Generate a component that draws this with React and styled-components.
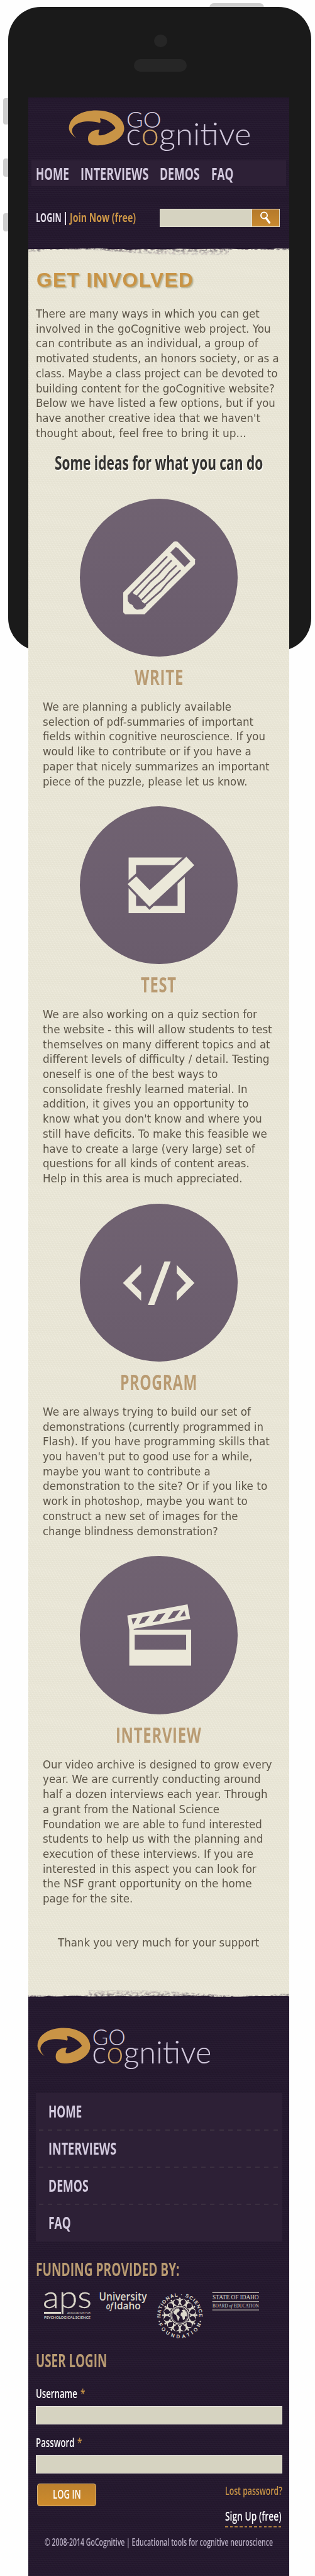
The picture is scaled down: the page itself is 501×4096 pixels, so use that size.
import React, { useLayoutEffect, useRef, useState } from "react";
import styled, { createGlobalStyle } from "styled-components";

const c = {
  night: "#24182e",
  panel: "#2d2036",
  paper: "#e8e5d6",
  cream: "#ebe8d9",
  field: "#d6d3c1",
  gold: "#c99446",
  tan: "#b99b72",
  lilac: "#d3cade",
  plum: "#6d5f6f",
  ink: "#5b5447",
};
const condensed = '"Open Sans", "Noto Sans", sans-serif';
const wide = '"DejaVu Sans", sans-serif';

const GlobalStyle = createGlobalStyle`
  body { margin: 0; background: #fefefe; }
  * { box-sizing: border-box; }
  h1, h2, h3, p, form { margin: 0; font-weight: inherit; }
`;

/* Text squeezed or stretched horizontally to an exact width */
const FitBox = styled.span`
  display: block;
  flex: none;
  width: ${(p) => p.$w}px;
  white-space: nowrap;
`;
const FitInner = styled.span`
  display: inline-block;
  transform-origin: 0 50%;
`;
function Fit({ w, children }) {
  const ref = useRef(null);
  const [scale, setScale] = useState(1);
  useLayoutEffect(() => {
    const natural = ref.current.offsetWidth;
    if (natural) setScale(w / natural);
  }, [w]);
  return (
    <FitBox $w={w}>
      <FitInner ref={ref} style={{ transform: `scaleX(${scale})` }}>{children}</FitInner>
    </FitBox>
  );
}

const Stage = styled.div`
  position: relative;
  width: 501px;
  height: 4096px;
  overflow: hidden;
  padding: 154.5px 0 0 45.4px;
`;
const PhoneBody = styled.div`
  position: absolute;
  left: 12.5px;
  top: 11.3px;
  width: 482.3px;
  height: 1023.5px;
  border-radius: 52px;
  background: #1a1a1a;
`;
const PhoneKey = styled.div`
  position: absolute;
  background: #cecece;
  left: ${(p) => p.$x}px;
  top: ${(p) => p.$y}px;
  width: ${(p) => p.$w}px;
  height: ${(p) => p.$h}px;
  border-radius: ${(p) => p.$r};
`;
const Camera = styled.div`
  position: absolute;
  left: 245.4px;
  top: 54.5px;
  width: 20.8px;
  height: 20.8px;
  border-radius: 50%;
  background: #262626;
`;
const Speaker = styled.div`
  position: absolute;
  left: 212.5px;
  top: 93.6px;
  width: 84.6px;
  height: 20.9px;
  border-radius: 10px;
  background: #262626;
`;
const Page = styled.main`
  position: relative;
  width: 414.7px;
`;
const weaveDark = `repeating-linear-gradient(0deg, rgba(255,255,255,.018) 0 1px, transparent 1px 3px),
  repeating-linear-gradient(63deg, rgba(0,0,0,.06) 0 1px, transparent 1px 4px)`;
const weaveLight = `repeating-linear-gradient(0deg, rgba(120,110,60,.025) 0 1px, transparent 1px 3px),
  repeating-linear-gradient(63deg, rgba(255,255,240,.2) 0 1px, transparent 1px 4px)`;

const Header = styled.header`
  height: 240.5px;
  padding-top: 20.3px;
  background: ${weaveDark}, ${c.night};
`;
const LogoSvg = styled.svg`
  display: block;
  margin-left: ${(p) => p.$ml}px;
  overflow: visible;
`;
const NavBar = styled.nav`
  display: flex;
  align-items: center;
  gap: 17.8px;
  height: 40.6px;
  margin: 14.7px 4.7px 0 4.2px;
  padding-left: 7.6px;
  background: ${c.panel};
  color: ${c.lilac};
  font: 700 26.8px/40px ${condensed};
`;
const ToolRow = styled.div`
  display: flex;
  align-items: center;
  height: 29.6px;
  margin-top: 35.6px;
  padding-left: 12px;
  color: #e2dce8;
  font: 700 19.3px/28px ${condensed};
`;
const Bar = styled.i`
  width: 2px;
  height: 21px;
  margin: 2px 5.6px 0 5.6px;
  background: #e2dce8;
`;
const Join = styled.span`color: ${c.gold};`;
const SearchBox = styled.div`
  display: flex;
  width: 190.4px;
  height: 29.6px;
  margin-left: 38.2px;
  background: ${c.field};
  border: 1px solid #dedccd;
`;
const SearchButton = styled.span`
  margin-left: auto;
  width: 44px;
  background: linear-gradient(#b5792a, #c88a30);
  border-left: 1px solid #eee6d2;
  display: flex;
  align-items: center;
  justify-content: center;
`;

const Content = styled.section`
  position: relative;
  height: 2780.3px;
  padding-top: 31.7px;
  background: ${weaveLight}, ${c.paper};
  color: ${c.ink};
`;
const EdgeSvg = styled.svg`
  position: absolute;
  left: 0;
  ${(p) => (p.$bottom ? "bottom: -1px; transform: scale(-1);" : "top: -1px;")}
  pointer-events: none;
`;
const Title = styled.h1`
  margin-left: 12.2px;
  font: 700 32px/36px "Liberation Sans", Arial, sans-serif;
  letter-spacing: 1.5px;
  color: ${c.gold};
  text-shadow: 2px 2px 2px rgba(150, 145, 105, 0.65);
`;
const Copy = styled.p`
  margin: ${(p) => p.$top}px 0 0 ${(p) => p.$left}px;
  font: 400 16.8px/23.7px ${wide};
`;
const Lead = styled.h2`
  margin: 17.1px 0 0 42px;
  font: 700 29.8px/36px ${condensed};
  color: #343331;
  text-shadow: 2px 2px 0 #fbfaf3;
`;
const Idea = styled.article`
  display: flex;
  flex-direction: column;
  padding-top: ${(p) => p.$top}px;
`;
const Disc = styled.div`
  width: 251.2px;
  height: 251.2px;
  margin-left: 81.2px;
  border-radius: 50%;
  background: linear-gradient(#706271, ${c.plum} 50%, #6a5c6c);
  svg { display: block; width: 100%; height: 100%; }
`;
const IdeaTitle = styled.h3`
  display: flex;
  justify-content: center;
  height: 38px;
  margin-top: 13.3px;
  font: 700 33.3px/38px ${condensed};
  letter-spacing: 1px;
  color: ${c.tan};
`;

const Footer = styled.footer`
  height: 921px;
  padding: 48.4px 11.5px 0;
  background: ${weaveDark}, ${c.night};
`;
const Menu = styled.ul`
  list-style: none;
  margin: 37.4px 0 0;
  padding: 0 7px 0 5px;
  height: 236px;
  background: ${c.panel};
`;
const MenuItem = styled.li`
  position: relative;
  height: 59px;
  padding-left: 15px;
  color: ${c.lilac};
  font: 700 26.6px/58px ${condensed};
  &:not(:last-child)::after {
    content: "";
    position: absolute;
    left: 0;
    right: 0;
    bottom: -1px;
    height: 2.5px;
    background: repeating-linear-gradient(90deg, #3b3040 0 7px, transparent 7px 14.33px);
  }
`;
const Heading = styled.h2`
  margin-top: ${(p) => p.$top}px;
  font: 700 28px/34px ${condensed};
  color: ${c.tan};
`;
const Sponsors = styled.div`
  display: flex;
  height: 77px;
  margin: 17.6px 0 0 13px;
  svg { display: block; overflow: visible; flex: none; }
`;
const Label = styled.label`
  display: flex;
  gap: 5px;
  margin-top: ${(p) => p.$top}px;
  font: 600 20px/24px ${condensed};
  color: #fff;
`;
const Star = styled.span`color: ${c.gold};`;
const Field = styled.div`
  height: 29.6px;
  margin-top: 7.4px;
  background: ${c.field};
  border: 1px solid #efede4;
`;
const Actions = styled.div`
  display: flex;
  justify-content: space-between;
  height: 71px;
  margin-top: 16.2px;
  padding-left: 2.5px;
`;
const LoginButton = styled.button`
  display: flex;
  justify-content: center;
  align-items: center;
  width: 93.8px;
  height: 36px;
  padding: 0 0 2px;
  border: 1px solid #d9b274;
  border-radius: 4px;
  background: linear-gradient(#bc812e, #cd8b2c);
  color: #fff;
  font: 600 19.6px/30px ${condensed};
`;
const Links = styled.div`
  display: flex;
  flex-direction: column;
  font: 600 18.3px/22px ${condensed};
  color: ${c.gold};
`;
const SignUp = styled.div`
  margin-top: 17.5px;
  height: 30px;
  font-size: 19.6px;
  line-height: 24px;
  color: #fff;
  background: repeating-linear-gradient(90deg, ${c.gold} 0 4.6px, transparent 4.6px 7.7px) 0 28.5px / 100% 1.5px no-repeat;
`;
const Legal = styled.p`
  margin: 12.6px 0 0 14.3px;
  font: 600 15.4px/20px ${condensed};
  color: #b9afc4;
`;

function Logo({ width, height, ml }) {
  return (
    <LogoSvg $ml={ml} width={width} height={height} viewBox="341 604 910 228" preserveAspectRatio="none">
      <path
        fill={c.gold}
        d="M380 758C350 737 343 717 343 702C345 640 410 606 480 606C560 606 618 650 618 705C618 760 550 798 485 798C455 798 437 785 438 760C438 730 460 712 496 712C492 722 488 735 492 742C510 750 560 720 575 703C565 680 530 652 497 650C499 658 503 667 498 675C460 662 400 662 372 688C350 710 356 735 380 758Z"
      />
      <g fill={c.lilac} fontFamily="Lato, sans-serif" fontWeight="300">
        <text x="629" y="701" fontSize="120" textLength="174" lengthAdjust="spacingAndGlyphs">GO</text>
        <text x="627" y="799" fontSize="168" textLength="624" lengthAdjust="spacingAndGlyphs">
          c<tspan fill="#d0a263">o</tspan>gnitive
        </text>
      </g>
    </LogoSvg>
  );
}

function Edge({ bottom, seed }) {
  const id = `edge${seed}`;
  return (
    <EdgeSvg $bottom={bottom} width="414.7" height="14" viewBox="0 0 414.7 14" aria-hidden="true">
      <defs>
        <linearGradient id={`${id}g`} x1="0" y1="0" x2="0" y2="1">
          <stop offset="0" stopColor={c.night} stopOpacity=".75" />
          <stop offset=".35" stopColor={c.night} stopOpacity=".35" />
          <stop offset="1" stopColor={c.night} stopOpacity=".06" />
        </linearGradient>
        <filter id={`${id}n`} x="0" y="0" width="100%" height="100%">
          <feTurbulence type="fractalNoise" baseFrequency=".2 .28" numOctaves="4" seed={seed} result="n" />
          <feColorMatrix in="n" type="matrix" values="0 0 0 0 0  0 0 0 0 0  0 0 0 0 0  3.4 0 0 0 -1.3" result="m" />
          <feComposite in="SourceGraphic" in2="m" operator="in" />
        </filter>
      </defs>
      <path
        d="M0 0H414.7V1.2L396 1L384 2L370 1.6L340 2.2L318 1.6L262 2L240 1.4L214 2.4L180 1.8L158 3.2L150 1.8L132 2.6L120 1L78 1.2L52 2L0 2Z"
        fill={c.night}
      />
      <path d="M0 1H414.7V4L380 3L319 3V12H230L190 10L150 7L125 5L90 2.6L30 3L18 6L0 6Z" fill={`url(#${id}g)`} filter={`url(#${id}n)`} />
    </EdgeSvg>
  );
}

const icons = {
  write: (
    <svg viewBox="397 35 783 804" preserveAspectRatio="none">
      <path fill={c.cream} d="M862 254Q872 250 882 254L968 343V368L718 623H621L612 613V512Z" />
      <path fill={c.plum} d="M873 281L885 288L945 354L917 382L846 309Z" />
      <path fill={c.plum} d="M634 528L657 502L664 520L684 529L700 546L706 560L722 571L726 580L708 597L680 600L666 591L658 576L644 569L635 555Z" />
      <path
        stroke={c.plum} strokeWidth="8" strokeLinecap="round" fill="none"
        d="M828 331L660 506M850 351L814 388L785 422L748 455L684 527M874 377L842 408L812 446L772 480L706 548M894 400L830 464L798 504L722 572"
      />
    </svg>
  ),
  test: (
    <svg viewBox="397 74 787 613" preserveAspectRatio="none">
      <path fill={c.cream} fillRule="evenodd" d="M640 273H920V489H640ZM677 302V461H884V302Z" />
      <path fill={c.cream} stroke={c.plum} strokeWidth="19" paintOrder="stroke" d="M635 376L678 346L745 400L928 270L967 303L744 464Z" />
    </svg>
  ),
  program: (
    <svg viewBox="397 96 791 666" preserveAspectRatio="none">
      <path fill={c.cream} d="M613 430L704 353V388L656 430L704 469V505ZM821 339H852L770 523H738ZM971 430L882 354V389L928 430L882 470V505Z" />
    </svg>
  ),
  interview: (
    <svg viewBox="395 85 789 528" preserveAspectRatio="none">
      <path
        fill={c.cream} fillRule="evenodd"
        d="M642 332L632 284L933 247L946 295L664 329V332H951V452H642ZM669 349V398H926V349ZM653 294L681 292L661 315ZM709 289L745 285L717 309L690 313ZM786 280L823 276L791 303L758 306ZM862 270L898 266L868 292L833 297ZM917 267L925 287L896 288Z"
      />
    </svg>
  ),
};

const span = (start, rows) => rows.map(([end, text]) => [Math.round((end - start) * 3.195) / 10, text]);

const intro = span(179, [
  [1291, "There are many ways in which you can get"],
  [1347, "involved in the goCognitive web project. You"],
  [1286, "can contribute as an individual, a group of"],
  [1389, "motivated students, an honors society, or as a"],
  [1382, "class. Maybe a class project can be devoted to"],
  [1368, "building content for the goCognitive website?"],
  [1371, "Below we have listed a few options, but if you"],
  [1297, "have another creative idea that we haven't"],
  [1226, "thought about, feel free to bring it up..."],
]);

const ideas = [
  {
    icon: "write", title: "WRITE", w: 78, top: 38.4,
    rows: span(213, [
      [1153, "We are planning a publicly available"],
      [1261, "selection of pdf-summaries of important"],
      [1321, "fields within cognitive neuroscience. If you"],
      [1252, "would like to contribute or if you have a"],
      [1343, "paper that nicely summarizes an important"],
      [1233, "piece of the puzzle, please let us know."],
    ]),
  },
  {
    icon: "test", title: "TEST", w: 57, top: 26.6,
    rows: span(213, [
      [1281, "We are also working on a quiz section for"],
      [1354, "the website - this will allow students to test"],
      [1346, "themselves on many different topics and at"],
      [1342, "different levels of difficulty / detail. Testing"],
      [1083, "oneself is one of the best ways to"],
      [1232, "consolidate freshly learned material. In"],
      [1239, "addition, it gives you an opportunity to"],
      [1305, "know what you don't know and where you"],
      [1330, "still have deficits. To make this feasible we"],
      [1269, "have to create a large (very large) set of"],
      [1241, "questions for all kinds of content areas."],
      [1206, "Help in this area is much appreciated."],
    ]),
  },
  {
    icon: "program", title: "PROGRAM", w: 123, top: 27,
    rows: span(213, [
      [1247, "We are always trying to build our set of"],
      [1313, "demonstrations (currently programmed in"],
      [1343, "Flash). If you have programming skills that"],
      [1255, "you haven't put to good use for a while,"],
      [1048, "maybe you want to contribute a"],
      [1330, "demonstration to the site? Or if you like to"],
      [1231, "work in photoshop, maybe you want to"],
      [1186, "construct a new set of images for the"],
      [1086, "change blindness demonstration?"],
    ]),
  },
  {
    icon: "interview", title: "INTERVIEW", w: 137, top: 27.2,
    rows: span(213, [
      [1354, "Our video archive is designed to grow every"],
      [1297, "year. We are currently conducting around"],
      [1331, "half a dozen interviews each year. Through"],
      [1094, "a grant from the National Science"],
      [1305, "Foundation we are able to fund interested"],
      [1309, "students to help us with the planning and"],
      [1261, "execution of these interviews. If you are"],
      [1275, "interested in this aspect you can look for"],
      [1253, "the NSF grant opportunity on the home"],
      [661, "page for the site."],
    ]),
  },
];

const menu = [["HOME", 53], ["INTERVIEWS", 108.5], ["DEMOS", 63.5], ["FAQ", 35.5]];
const spokes = Array.from({ length: 12 }, (_, i) => i * 30);

function Lines({ rows }) {
  return rows.map(([w, text]) => <Fit key={text} w={w}>{text}</Fit>);
}

function SponsorLogos() {
  const fill = "#dcd8cb";
  return (
    <Sponsors>
      <svg width="75" height="46" viewBox="0 0 75 46" fill={fill} fontFamily="Lato, sans-serif">
        <text x="-2" y="27" fontSize="50" fontWeight="300" stroke={fill} strokeWidth=".4" textLength="78" lengthAdjust="spacingAndGlyphs">aps</text>
        <rect x="0" y="33" width="27" height="3" />
        <text x="37" y="36" fontSize="4.4" textLength="37" lengthAdjust="spacingAndGlyphs">ASSOCIATION FOR</text>
        <text x="0" y="43.8" fontSize="6" fontWeight="700" textLength="74" lengthAdjust="spacingAndGlyphs">PSYCHOLOGICAL SCIENCE</text>
      </svg>
      <svg width="103" height="32" viewBox="0 0 103 32" fill={fill} fontFamily="'Open Sans', sans-serif" fontWeight="600">
        <text x="12.5" y="14.6" fontSize="17.4" textLength="76" lengthAdjust="spacingAndGlyphs">University</text>
        <text x="23.5" y="29.4" fontSize="14" fontStyle="italic" textLength="11" lengthAdjust="spacingAndGlyphs">of</text>
        <text x="36.3" y="29.4" fontSize="16" textLength="42.5" lengthAdjust="spacingAndGlyphs">Idaho</text>
      </svg>
      <svg width="76" height="76" viewBox="-38 -38.3 76 76" fill={fill}>
        <path id="sealTop" d="M-30.4 4A30.6 30.6 0 1 1 30.4 4" fill="none" />
        <path id="sealBottom" d="M-34 14A36.8 36.8 0 0 0 34 14" fill="none" />
        <g fontFamily="'Liberation Sans', sans-serif" fontWeight="700" fontSize="8">
          <text><textPath href="#sealTop" textLength="102">NATIONAL · SCIENCE</textPath></text>
          <text><textPath href="#sealBottom" textLength="86">FOUNDATION</textPath></text>
        </g>
        <circle cx="-32.6" cy="10" r="1.1" />
        <circle cx="32.6" cy="10" r="1.1" />
        {spokes.map((a) => (
          <g key={a} transform={`rotate(${a})`}>
            <path d="M-3.8 -14.8L-1.3 -20L-2.2 -23.2Q-5 -24.4 -7 -25.8Q-3 -25.6 -1 -25H1Q3 -25.6 7 -25.8Q5 -24.4 2.2 -23.2L1.3 -20L3.8 -14.8L0 -17Z" />
            <circle cx="0" cy="-26.6" r="1.5" />
          </g>
        ))}
        <circle r="14.2" fill={c.night} stroke={fill} strokeWidth="1.4" />
        <circle r="12.4" fill={c.night} stroke={fill} strokeWidth=".6" />
        <path d="M-10.5 -5Q-7 -11 -2 -11L0 -8L-2 -5L-4 -4L-5 -1L-2 1L0 3L-1 6L-3 10L-4 5L-6 0L-9 -2ZM3 -8L7 -9L11 -4L11 2L8 2L8 6L5 8L4 3L1 0L2 -4L5 -5Z" />
      </svg>
      <svg width="90" height="32" viewBox="-13.6 0 90 32" fill={fill} fontFamily="'Liberation Serif', serif">
        <path d="M0 2.5H74.4M0 16.7H74.4M0 30H74.4" stroke={fill} strokeWidth=".9" />
        <text x=".5" y="13.4" fontSize="9.6" textLength="73.4" lengthAdjust="spacingAndGlyphs">STATE OF IDAHO</text>
        <text x=".5" y="26" fontSize="7.6" textLength="73.4" lengthAdjust="spacingAndGlyphs">
          BOARD <tspan fontStyle="italic">of</tspan> EDUCATION
        </text>
      </svg>
    </Sponsors>
  );
}

export default function App() {
  return (
    <Stage>
      <GlobalStyle />
      <PhoneKey $x={333.2} $y={5.2} $w={86.8} $h={10} $r="7px 7px 0 0" />
      <PhoneKey $x={4.5} $y={155.6} $w={10} $h={42.8} $r="4px 0 0 4px" />
      <PhoneKey $x={4.5} $y={252.1} $w={10} $h={28.6} $r="4px 0 0 4px" />
      <PhoneKey $x={4.5} $y={339} $w={10} $h={28.6} $r="4px 0 0 4px" />
      <PhoneBody />
      <Camera />
      <Speaker />
      <Page>
        <Header>
          <Logo width={290.7} height={66} ml={63.6} />
          <NavBar>
            {menu.map(([t, w]) => <Fit key={t} w={w}>{t}</Fit>)}
          </NavBar>
          <ToolRow>
            <Fit w={40.5}>LOGIN</Fit>
            <Bar />
            <Join><Fit w={105}>Join Now (free)</Fit></Join>
            <SearchBox>
              <SearchButton>
                <svg width="18" height="20" viewBox="0 0 18 20" fill="none" stroke="#fff" strokeLinecap="round">
                  <circle cx="7" cy="6.5" r="5" strokeWidth="2" />
                  <path d="M10 10.5L15.5 18" strokeWidth="3.2" />
                </svg>
              </SearchButton>
            </SearchBox>
          </ToolRow>
        </Header>
        <Content>
          <Edge seed={4} />
          <Title><Fit w={250.5}>GET INVOLVED</Fit></Title>
          <Copy $top={25.3} $left={11.8}><Lines rows={intro} /></Copy>
          <Lead><Fit w={331}>Some ideas for what you can do</Fit></Lead>
          {ideas.map((idea) => (
            <Idea key={idea.title} $top={idea.top}>
              <Disc>{icons[idea.icon]}</Disc>
              <IdeaTitle><Fit w={idea.w}>{idea.title}</Fit></IdeaTitle>
              <Copy $top={17.8} $left={22.6}><Lines rows={idea.rows} /></Copy>
            </Idea>
          ))}
          <Copy $top={46.6} $left={46.9}><Fit w={320.8}>Thank you very much for your support</Fit></Copy>
          <Edge bottom seed={9} />
        </Content>
        <Footer>
          <Logo width={277.5} height={67} ml={2.2} />
          <Menu>
            {menu.map(([t, w]) => <MenuItem key={t}><Fit w={w}>{t}</Fit></MenuItem>)}
          </Menu>
          <Heading $top={27.4}><Fit w={228.5}>FUNDING PROVIDED BY:</Fit></Heading>
          <SponsorLogos />
          <Heading $top={16.2}><Fit w={113}>USER LOGIN</Fit></Heading>
          <form>
            <Label $top={23.9}><Fit w={66}>Username</Fit><Star><Fit w={7.5}>*</Fit></Star></Label>
            <Field />
            <Label $top={17.2}><Fit w={61.5}>Password</Fit><Star><Fit w={7.5}>*</Fit></Star></Label>
            <Field />
            <Actions>
              <LoginButton type="button"><Fit w={45}>LOG IN</Fit></LoginButton>
              <Links>
                <Fit w={90.5}>Lost password?</Fit>
                <SignUp><Fit w={89.5}>Sign Up (free)</Fit></SignUp>
              </Links>
            </Actions>
          </form>
          <Legal><Fit w={363}>© 2008-2014 GoCognitive | Educational tools for cognitive neuroscience</Fit></Legal>
        </Footer>
      </Page>
    </Stage>
  );
}
